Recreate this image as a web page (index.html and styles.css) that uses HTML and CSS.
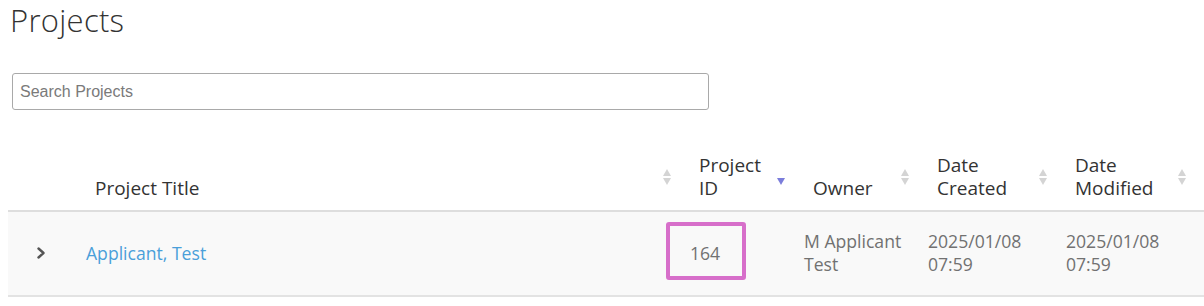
FILE: index.html
```html
<!DOCTYPE html>
<html lang="en">
<head>
<meta charset="utf-8">
<title>Projects</title>
<link rel="stylesheet" href="styles.css">
</head>
<body>
<h1 class="page-title">Projects</h1>
<input class="search" type="text" placeholder="Search Projects">
<table class="projects">
  <colgroup>
    <col class="c-expand">
    <col class="c-title">
    <col class="c-id">
    <col class="c-owner">
    <col class="c-created">
    <col class="c-modified">
  </colgroup>
  <thead>
    <tr>
      <th class="th-empty"></th>
      <th><div class="th-inner"><span class="th-text">Project Title</span><span class="sort"><span class="up"></span><span class="down"></span></span></div></th>
      <th><div class="th-inner"><span class="th-text">Project<br>ID</span><span class="sort sorted-desc"><span class="up"></span><span class="down"></span></span></div></th>
      <th><div class="th-inner"><span class="th-text">Owner</span><span class="sort"><span class="up"></span><span class="down"></span></span></div></th>
      <th><div class="th-inner"><span class="th-text">Date<br>Created</span><span class="sort"><span class="up"></span><span class="down"></span></span></div></th>
      <th class="th-last"><div class="th-inner"><span class="th-text">Date<br>Modified</span><span class="sort"><span class="up"></span><span class="down"></span></span></div></th>
    </tr>
  </thead>
  <tbody>
    <tr>
      <td class="td-expand">
        <svg class="chevron" width="10" height="12" viewBox="0 0 10 12" aria-hidden="true"><path d="M2.5 1.5 L7.5 6 L2.5 10.5" fill="none" stroke="#555" stroke-width="2.4" stroke-linecap="round" stroke-linejoin="round"/></svg>
      </td>
      <td><a class="link" href="#">Applicant, Test</a></td>
      <td class="td-id">164<span class="highlight"></span></td>
      <td>M Applicant<br>Test</td>
      <td>2025/01/08<br>07:59</td>
      <td>2025/01/08<br>07:59</td>
    </tr>
  </tbody>
</table>
</body>
</html>
```
FILE: styles.css
```css
html, body {
  margin: 0;
  padding: 0;
  background: #ffffff;
}
body {
  padding: 0 0 0 8px;
  font-family: "Open Sans", "Noto Sans", sans-serif;
  color: #333;
}
.page-title {
  margin: 2px 0 0 2px;
  font-family: "Open Sans", sans-serif;
  font-weight: 300;
  font-size: 31px;
  letter-spacing: 0.3px;
  line-height: 36px;
  color: #333;
}
.search {
  display: block;
  box-sizing: border-box;
  margin: 35px 0 0 4px;
  width: 697px;
  height: 37px;
  padding: 0 7px;
  border: 1px solid #a9a9a9;
  border-radius: 3px;
  font-family: "Liberation Sans", Arial, sans-serif;
  font-size: 16px;
  color: #333;
  outline: none;
}
.search::placeholder {
  color: #7a7a7a;
}
.projects {
  margin-top: 35px;
  width: 1196px;
  border-collapse: collapse;
  table-layout: fixed;
}
.c-expand { width: 68px; }
.c-title { width: 604px; }
.c-id { width: 114px; }
.c-owner { width: 124px; }
.c-created { width: 138px; }
.c-modified { width: 148px; }
.projects th {
  padding: 9px 8px 10px 19px;
  vertical-align: bottom;
  text-align: left;
  font-weight: 400;
  font-size: 19px;
  line-height: 23px;
  color: #333;
  border-bottom: 2px solid #dedede;
}
.projects th.th-last {
  padding-right: 17px;
}
.th-inner {
  display: flex;
  align-items: center;
  justify-content: space-between;
  min-height: 46px;
}
.th-text {
  align-self: flex-end;
}
.sort {
  display: flex;
  flex-direction: column;
  justify-content: space-between;
  width: 9px;
  height: 16px;
  flex: none;
}
.sort .up {
  width: 0;
  height: 0;
  border-left: 4.5px solid transparent;
  border-right: 4.5px solid transparent;
  border-bottom: 7px solid #d4d4d4;
}
.sort .down {
  width: 0;
  height: 0;
  border-left: 4.5px solid transparent;
  border-right: 4.5px solid transparent;
  border-top: 7px solid #d4d4d4;
}
.sort.sorted-desc .up {
  border-bottom-color: transparent;
}
.sort.sorted-desc .down {
  border-top-color: #7b7ddb;
}
.projects tbody tr {
  background: #f9f9f9;
}
.projects td {
  padding: 18px 8px 19px 10px;
  vertical-align: middle;
  font-size: 17.6px;
  line-height: 23px;
  color: #717171;
  border-bottom: 2px solid #e3e3e3;
}
.projects td.td-expand {
  padding-left: 28px;
}
.chevron {
  display: block;
}
.link {
  color: #4a9fd9;
  text-decoration: none;
}
.td-id {
  position: relative;
}
.highlight {
  position: absolute;
  left: -14px;
  top: 10px;
  width: 80px;
  height: 58px;
  box-sizing: border-box;
  border: 4px solid #d76fca;
  border-radius: 3px;
}
```
